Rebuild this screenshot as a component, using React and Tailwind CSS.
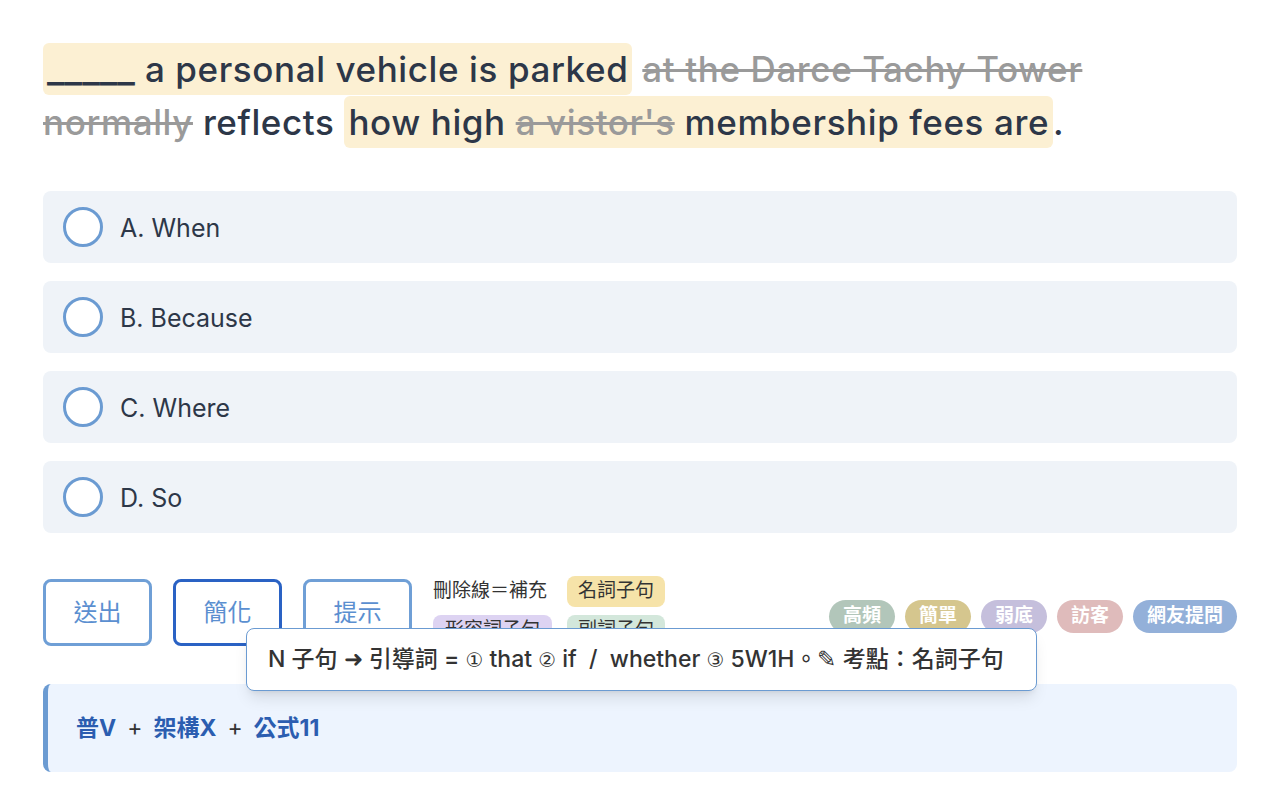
import React from "react";

const FONT = { fontFamily: '"Inter", "Noto Sans CJK TC", sans-serif' };
const CIRCLED = { fontFamily: '"DejaVu Sans", sans-serif' };

const options = ["A. When", "B. Because", "C. Where", "D. So"];

const levelTags = [
  { label: "高頻", cls: "bg-[#b2c6ba]" },
  { label: "簡單", cls: "bg-[#d5c68e]" },
  { label: "弱底", cls: "bg-[#c5bfdc]" },
  { label: "訪客", cls: "bg-[#dfbbbb]" },
  { label: "網友提問", cls: "bg-[#93b0d9]" },
];

function Hl({ children }) {
  return (
    <span className="rounded-md bg-[#fcf0d3] px-[4px] py-[5px] [box-decoration-break:clone]">
      {children}
    </span>
  );
}

function Del({ children }) {
  return (
    <span className="text-[#9a9a9a] line-through decoration-[#9a9a9a] decoration-[2.5px]">
      {children}
    </span>
  );
}

function Num({ children }) {
  return (
    <span className="text-[20px]" style={CIRCLED}>
      {children}
    </span>
  );
}

export default function App() {
  return (
    <div className="min-h-[812px] bg-white px-[43px] pt-[42px] text-[#2d3748]" style={FONT}>
      <p className="text-[35px] font-medium leading-[53px] tracking-[0.6px]">
        <Hl>
          <span className="text-[38px] tracking-normal">_____</span> a personal vehicle is parked
        </Hl>{" "}
        <Del>at the Darce Tachy Tower normally</Del> reflects{" "}
        <Hl>
          how high <Del>a vistor's</Del> membership fees are
        </Hl>
        .
      </p>

      <div className="mt-[42px] flex flex-col gap-[18px]">
        {options.map((opt) => (
          <div key={opt} className="flex h-[72px] items-center gap-[17px] rounded-lg bg-[#eff3f8] px-5">
            <span className="h-10 w-10 rounded-full border-[3px] border-[#6b9bd2] bg-white" />
            <span className="pt-[3px] text-[25px] text-[#2d3748]">{opt}</span>
          </div>
        ))}
      </div>

      <div className="relative mt-[46px] flex items-start">
        <div className="flex gap-[21px]">
          <button className="h-[67px] w-[109px] rounded-lg border-[3px] border-[#6f9fd6] text-[24px] text-[#5b8fd0]">
            送出
          </button>
          <button className="h-[67px] w-[109px] rounded-lg border-[3px] border-[#2a62c4] text-[24px] text-[#5b8fd0]">
            簡化
          </button>
          <button className="h-[67px] w-[109px] rounded-lg border-[3px] border-[#6f9fd6] text-[24px] text-[#5b8fd0]">
            提示
          </button>
        </div>

        <div className="-mt-[3px] ml-[21px] grid grid-cols-[auto_auto] items-center gap-x-[15px] gap-y-[8px]">
          <span className="text-[19px] text-[#333]">刪除線＝補充</span>
          <span className="rounded-lg bg-[#f6e3a9] px-[11px] py-[1px] text-[19px] text-[#333]">名詞子句</span>
          <span className="rounded-lg bg-[#ddd3f2] px-[12px] py-[1px] text-[19px] text-[#333]">形容詞子句</span>
          <span className="rounded-lg bg-[#d3e7db] px-[11px] py-[1px] text-[19px] text-[#333]">副詞子句</span>
        </div>

        <div className="ml-auto mt-[21px] flex gap-[10px]">
          {levelTags.map((t) => (
            <span
              key={t.label}
              className={`flex h-[33px] items-center rounded-full px-[14px] text-[19px] font-bold text-white ${t.cls}`}
            >
              {t.label}
            </span>
          ))}
        </div>

        <div className="absolute left-[203px] top-[49px] z-10 flex h-[63px] w-[791px] items-center whitespace-pre rounded-lg border border-[#6b9bd2] bg-white px-[21px] text-[23px] font-medium text-[#333] shadow-lg">
          {"N 子句 ➜ 引導詞 = "}
          <Num>①</Num>
          {" that "}
          <Num>②</Num>
          {" if  /  whether "}
          <Num>③</Num>
          {" 5W1H。✎ 考點：名詞子句"}
        </div>
      </div>

      <div className="mt-[38px] flex h-[88px] items-center rounded-lg border-l-[5px] border-[#6b9bd2] bg-[#edf4fe] pl-[28px] text-[23px] font-bold text-[#2b5db0]">
        普V <span className="mx-[11px] font-normal text-[#333]">+</span> 架構X{" "}
        <span className="mx-[11px] font-normal text-[#333]">+</span> 公式11
      </div>
    </div>
  );
}
